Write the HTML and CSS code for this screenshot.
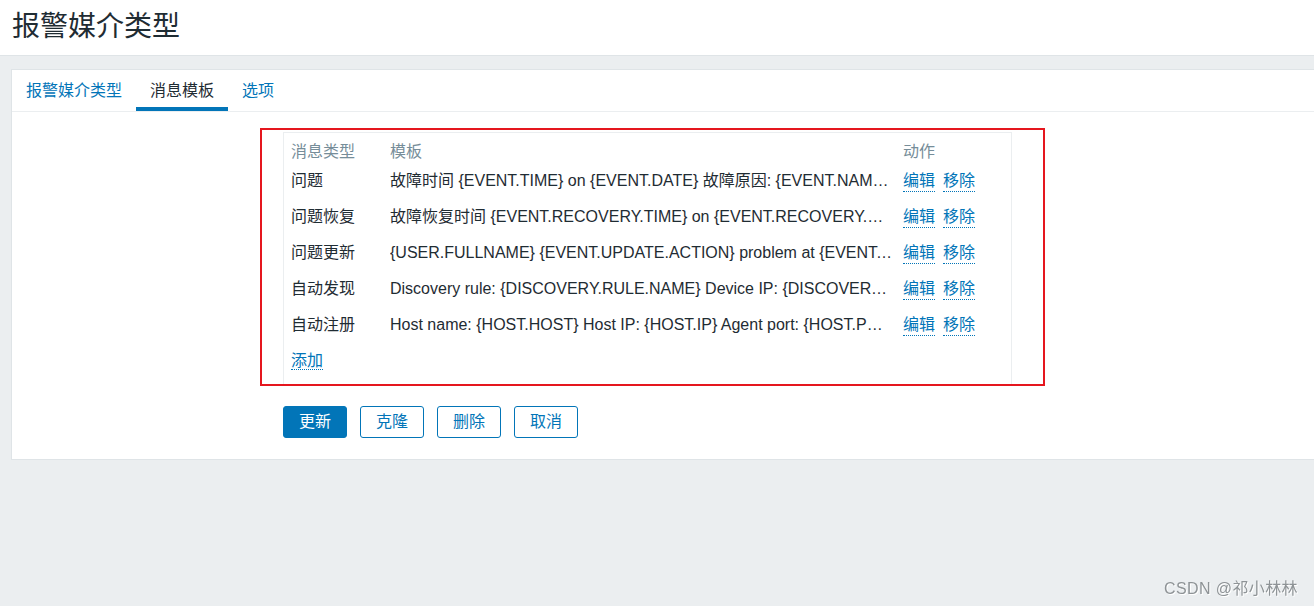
FILE: index.html
```html
<!DOCTYPE html>
<html lang="zh">
<head>
<meta charset="utf-8">
<title>报警媒介类型</title>
<link rel="stylesheet" href="styles.css">
</head>
<body>
<header class="page-header">
  <h1 class="page-title">报警媒介类型</h1>
</header>
<main class="panel">
  <nav class="tabs">
    <a class="tab">报警媒介类型</a>
    <a class="tab tab-active">消息模板</a>
    <a class="tab">选项</a>
  </nav>
  <section class="tab-body">
    <div class="highlight">
      <div class="tpl-box">
        <div class="tpl-grid">
          <div class="th">消息类型</div>
          <div class="th">模板</div>
          <div class="th">动作</div>

          <div class="td">问题</div>
          <div class="td tpl">故障时间 {EVENT.TIME} on {EVENT.DATE} 故障原因: {EVENT.NAME} 故障主机: {HOST.NAME}</div>
          <div class="td acts"><a class="lnk">编辑</a><a class="lnk">移除</a></div>

          <div class="td">问题恢复</div>
          <div class="td tpl">故障恢复时间 {EVENT.RECOVERY.TIME} on {EVENT.RECOVERY.DATE} 故障原因: {EVENT.NAME}</div>
          <div class="td acts"><a class="lnk">编辑</a><a class="lnk">移除</a></div>

          <div class="td">问题更新</div>
          <div class="td tpl">{USER.FULLNAME} {EVENT.UPDATE.ACTION} problem at {EVENT.UPDATE.DATE} {EVENT.UPDATE.TIME}</div>
          <div class="td acts"><a class="lnk">编辑</a><a class="lnk">移除</a></div>

          <div class="td">自动发现</div>
          <div class="td tpl">Discovery rule: {DISCOVERY.RULE.NAME} Device IP: {DISCOVERY.DEVICE.IPADDRESS}</div>
          <div class="td acts"><a class="lnk">编辑</a><a class="lnk">移除</a></div>

          <div class="td">自动注册</div>
          <div class="td tpl">Host name: {HOST.HOST} Host IP: {HOST.IP} Agent port: {HOST.PORT}</div>
          <div class="td acts"><a class="lnk">编辑</a><a class="lnk">移除</a></div>

          <div class="td"><a class="lnk">添加</a></div>
        </div>
      </div>
    </div>
    <div class="buttons">
      <button class="btn btn-primary">更新</button>
      <button class="btn">克隆</button>
      <button class="btn">删除</button>
      <button class="btn">取消</button>
    </div>
  </section>
</main>
<div class="watermark">CSDN @祁小林林</div>
</body>
</html>
```
FILE: styles.css
```css
html, body {
  margin: 0;
  padding: 0;
}
body {
  background: #ebeef0;
  font-family: "Liberation Sans", Arial, "Noto Sans CJK SC", sans-serif;
  font-size: 16px;
  color: #1f2c33;
  min-height: 606px;
  overflow: hidden;
}
.page-header {
  background: #ffffff;
  height: 56px;
  border-bottom: 1px solid #dfe4e7;
  box-sizing: border-box;
  display: flex;
  align-items: center;
  padding: 0 0 2px 12px;
}
.page-title {
  margin: 0;
  font-size: 28px;
  font-weight: normal;
  color: #1f2c33;
  line-height: 1;
}
.panel {
  display: block;
  background: #ffffff;
  margin: 13px 0 0 11px;
  border: 1px solid #dfe4e7;
  border-right: none;
}
.tabs {
  display: flex;
  height: 41px;
  border-bottom: 1px solid #ebeef0;
}
.tab {
  padding: 0 14px;
  color: #0275b8;
  line-height: 41px;
  border-bottom: 4px solid transparent;
  height: 37px;
  cursor: pointer;
}
.tab-active {
  color: #1f2c33;
  border-bottom-color: #0275b8;
}
.tab-body {
  padding: 16px 0 21px 0;
}
.highlight {
  margin-left: 248px;
  width: 785px;
  height: 258px;
  box-sizing: border-box;
  border: 2px solid #e5161e;
  padding: 2px 0 0 21px;
}
.tpl-box {
  width: 729px;
  height: 252px;
  box-sizing: border-box;
  border: 1px solid #ebeef0;
  border-bottom: none;
  padding: 7px 0 0 7px;
}
.tpl-grid {
  display: grid;
  grid-template-columns: 99px 513px 1fr;
  grid-auto-rows: 36px;
  grid-template-rows: 23px;
}
.th {
  color: #768d99;
  line-height: 24px;
}
.td {
  line-height: 36px;
  white-space: nowrap;
}
.tpl {
  overflow: hidden;
  text-overflow: ellipsis;
  padding-right: 10px;
}
.acts {
  display: flex;
  gap: 8px;
  align-items: center;
}
.lnk {
  color: #0275b8;
  line-height: 20px;
  border-bottom: 1px dotted #0275b8;
  cursor: pointer;
}
.buttons {
  display: flex;
  gap: 13px;
  margin: 20px 0 0 271px;
}
.btn {
  font-family: inherit;
  font-size: 16px;
  height: 32px;
  padding: 0 15px;
  border: 1px solid #0275b8;
  border-radius: 3px;
  background: #ffffff;
  color: #0275b8;
  line-height: 30px;
}
.btn-primary {
  background: #0275b8;
  color: #ffffff;
}
.watermark {
  position: fixed;
  right: 16px;
  bottom: 7px;
  font-size: 16px;
  letter-spacing: 0.4px;
  color: #8e9396;
  text-shadow: 1px 1px 0 #ffffff;
}
```
